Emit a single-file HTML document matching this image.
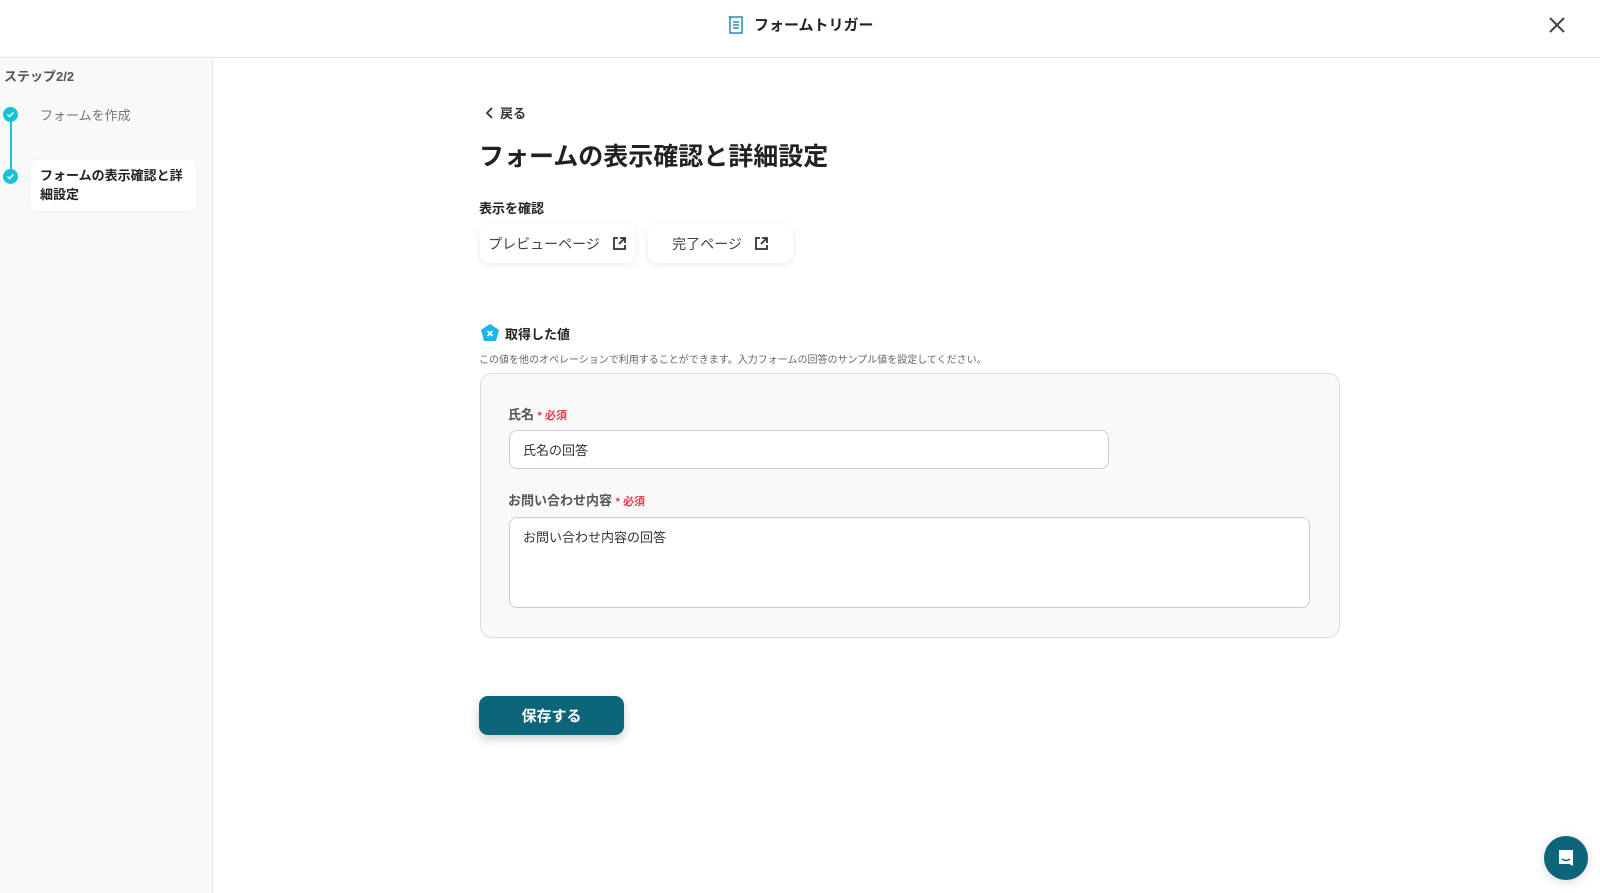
<!DOCTYPE html>
<html><head><meta charset="utf-8"><style>
*{box-sizing:border-box;margin:0;padding:0}
body{width:1600px;height:893px;overflow:hidden;background:#fff;font-family:"Liberation Sans","Noto Sans CJK JP",sans-serif;color:#222;position:relative}
.abs{position:absolute}
.hdr{left:0;top:0;width:1600px;height:58px;border-bottom:1px solid #e3e3e3;background:#fff}
.side{left:0;top:59px;width:213px;height:834px;background:#f9f9f9;border-right:1px solid #e3e3e3}
.chk{width:15px;height:15px;border-radius:50%;background:#18c2d6}
.btn{background:#fff;border-radius:10px;box-shadow:0 2px 8px rgba(0,0,0,0.08);font-size:14px;color:#444;display:flex;align-items:center;justify-content:center;gap:12px}
.req{color:#e8384f;font-size:11px;font-weight:bold}
</style></head><body>
<div class="abs hdr"></div>
<svg class="abs" style="left:726px;top:14px" width="20" height="22" viewBox="0 0 20 22"><path d="M4 3h12v16H4z" fill="none" stroke="#2a8fa6" stroke-width="1.5"/><path d="M7 8h6M7 11h6M7 14h6" stroke="#2a8fa6" stroke-width="1.5"/><path d="M3 2l2 3" stroke="#2a8fa6" stroke-width="1.5"/></svg>
<div class="abs" style="left:754px;top:14px;font-size:15px;font-weight:bold">フォームトリガー</div>
<svg class="abs" style="left:1548px;top:16px" width="18" height="18" viewBox="0 0 18 18"><path d="M2 2l14 14M16 2L2 16" stroke="#444" stroke-width="2"/></svg>
<div class="abs side"></div>
<div class="abs" style="left:4px;top:66px;font-size:13px;font-weight:bold;color:#555">ステップ2/2</div>
<div class="abs" style="left:10px;top:116px;width:2px;height:60px;background:#18c2d6"></div>
<svg class="abs" style="left:3px;top:107px" width="15" height="15" viewBox="0 0 15 15"><circle cx="7.5" cy="7.5" r="7.5" fill="#18c2d6"/><path d="M4.5 7.5l2 2 4-4" stroke="#fff" stroke-width="1.5" fill="none"/></svg>
<svg class="abs" style="left:3px;top:169px" width="15" height="15" viewBox="0 0 15 15"><circle cx="7.5" cy="7.5" r="7.5" fill="#18c2d6"/><path d="M4.5 7.5l2 2 4-4" stroke="#fff" stroke-width="1.5" fill="none"/></svg>
<div class="abs" style="left:40px;top:105px;font-size:13px;color:#777">フォームを作成</div>
<div class="abs" style="left:30px;top:160px;width:167px;height:51px;background:#fff;border-radius:8px;box-shadow:0 1px 4px rgba(0,0,0,0.06)"></div>
<div class="abs" style="left:40px;top:166px;width:150px;font-size:13px;font-weight:bold;line-height:19px">フォームの表示確認と詳細設定</div>
<svg class="abs" style="left:485px;top:107px" width="10" height="12" viewBox="0 0 10 12"><path d="M7 1L2 6l5 5" stroke="#333" stroke-width="1.8" fill="none"/></svg>
<div class="abs" style="left:500px;top:103px;font-size:13px;font-weight:bold;color:#333">戻る</div>
<div class="abs" style="left:479px;top:137px;font-size:25px;font-weight:bold">フォームの表示確認と詳細設定</div>
<div class="abs" style="left:479px;top:198px;font-size:13px;font-weight:bold">表示を確認</div>
<div class="abs btn" style="left:480px;top:224px;width:155px;height:39px">プレビューページ <svg width="15" height="15" viewBox="0 0 15 15"><path d="M6 2H2v11h11V9" stroke="#333" stroke-width="1.8" fill="none"/><path d="M8 2h5v5M13 2L7 8" stroke="#333" stroke-width="1.8" fill="none"/></svg></div>
<div class="abs btn" style="left:648px;top:224px;width:145px;height:39px">完了ページ <svg width="15" height="15" viewBox="0 0 15 15"><path d="M6 2H2v11h11V9" stroke="#333" stroke-width="1.8" fill="none"/><path d="M8 2h5v5M13 2L7 8" stroke="#333" stroke-width="1.8" fill="none"/></svg></div>
<svg class="abs" style="left:480px;top:323px" width="20" height="19" viewBox="0 0 20 19"><path d="M10 1l9 6-3 11H4L1 7z" fill="#18b7e6"/><path d="M7.5 8l5 5M12.5 8l-5 5" stroke="#fff" stroke-width="1.6"/></svg>
<div class="abs" style="left:505px;top:324px;font-size:13px;font-weight:bold">取得した値</div>
<div class="abs" style="left:479px;top:351px;font-size:10px;color:#666">この値を他のオペレーションで利用することができます。入力フォームの回答のサンプル値を設定してください。</div>
<div class="abs" style="left:480px;top:373px;width:860px;height:265px;background:#f9f9f9;border:1px solid #ddd;border-radius:12px"></div>
<div class="abs" style="left:508px;top:404px;font-size:13px;font-weight:bold;color:#555">氏名 <span class="req">* 必須</span></div>
<div class="abs" style="left:509px;top:430px;width:600px;height:39px;background:#fff;border:1px solid #ccc;border-radius:8px;font-size:13px;padding:9px 13px;color:#333">氏名の回答</div>
<div class="abs" style="left:508px;top:490px;font-size:13px;font-weight:bold;color:#555">お問い合わせ内容 <span class="req">* 必須</span></div>
<div class="abs" style="left:509px;top:517px;width:801px;height:91px;background:#fff;border:1px solid #ccc;border-radius:8px;font-size:13px;padding:9px 13px;color:#333">お問い合わせ内容の回答</div>
<div class="abs" style="left:479px;top:696px;width:145px;height:39px;background:#0c6579;border-radius:9px;box-shadow:0 4px 10px rgba(0,0,0,0.2);color:#fff;font-size:15px;font-weight:bold;display:flex;align-items:center;justify-content:center">保存する</div>
<div class="abs" style="left:1544px;top:836px;width:44px;height:44px;border-radius:50%;background:#0c6579;box-shadow:0 2px 10px rgba(0,0,0,0.15)"></div>
<svg class="abs" style="left:1555px;top:847px" width="22" height="22" viewBox="0 0 22 22"><path d="M4 3h14v16l-4-2H4z" fill="#fff"/><path d="M7 12q4 3 8 0" stroke="#0c6579" stroke-width="1.5" fill="none"/></svg>
</body></html>
